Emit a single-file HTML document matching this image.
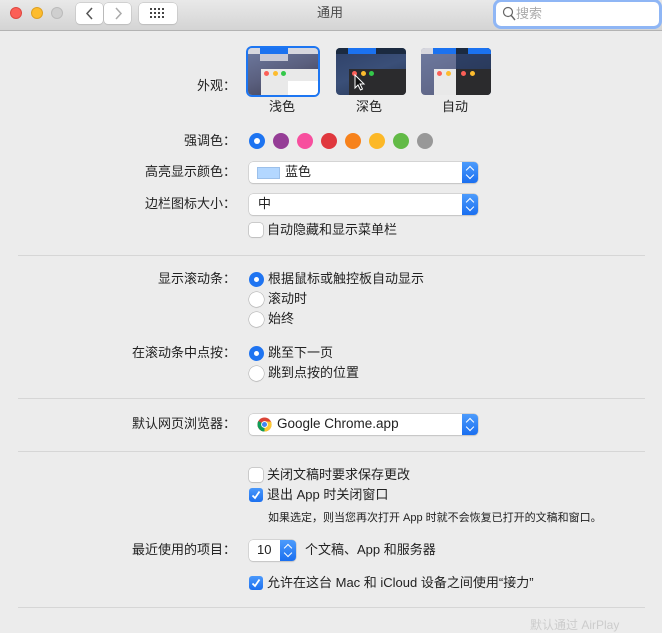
<!DOCTYPE html>
<html><head><meta charset="utf-8"><style>
*{margin:0;padding:0;box-sizing:border-box}
body{width:662px;height:624px;background:#ececec;font-family:"Liberation Sans","Noto Sans CJK SC",sans-serif;font-size:13px;color:#222;position:relative;overflow:hidden}
.a{position:absolute}
.tb{left:0;top:0;width:662px;height:31px;background:linear-gradient(#e9e9e9,#d4d4d4);border-bottom:1px solid #b3b3b3}
.tl{width:12px;height:12px;border-radius:50%;top:7px}
.btn{background:#fff;border-radius:4px;box-shadow:0 0 0 .5px #bbb,0 1px 1px rgba(0,0,0,.12);height:21px;top:3px}
.lbl{right:426px;text-align:right;white-space:nowrap;line-height:16px}
.txt{white-space:nowrap;line-height:16px}
.sep{left:18px;width:627px;height:1px;background:#d6d6d6}
.pop{background:#fff;border-radius:4px;box-shadow:0 0 0 .5px #bdbdbd,0 1px 1px rgba(0,0,0,.15);height:21px}
.step{position:absolute;right:0;top:0;width:16px;height:21px;background:linear-gradient(#4c9bfc,#1a6ff0);border-radius:0 4px 4px 0}
.cb{width:14px;height:14px;border-radius:3px;background:#fff;box-shadow:0 0 0 .5px #aaa,0 1px 1px rgba(0,0,0,.1)}
.cbon{background:linear-gradient(#4a98fb,#1c70ef);box-shadow:none}
.rd{width:15px;height:15px;border-radius:50%;background:#fff;box-shadow:0 0 0 .5px #aaa,0 1px 1px rgba(0,0,0,.1)}
.rdon{background:#1f74f1;box-shadow:none}
.rdon:after{content:"";position:absolute;left:5px;top:5px;width:5px;height:5px;border-radius:50%;background:#fff}
.dot{width:16px;height:16px;border-radius:50%;top:133px}
.th{width:70px;height:47px;top:48px;border-radius:4px;overflow:hidden}
</style></head><body>
<div class="a tb"></div>
<div class="a tl" style="left:10px;background:#fc5f57;border:.5px solid #de4840"></div>
<div class="a tl" style="left:31px;background:#fdbc2e;border:.5px solid #dea123"></div>
<div class="a tl" style="left:51px;background:#cfcfcf;border:.5px solid #bbb"></div>
<div class="a btn" style="left:76px;width:27px"></div>
<div class="a btn" style="left:104px;width:27px"></div>
<svg class="a" style="left:84px;top:6px" width="12" height="15"><path d="M8 2 L3 7.5 L8 13" stroke="#555" stroke-width="1.5" fill="none"/></svg>
<svg class="a" style="left:112px;top:6px" width="12" height="15"><path d="M4 2 L9 7.5 L4 13" stroke="#aaa" stroke-width="1.5" fill="none"/></svg>
<div class="a btn" style="left:139px;width:38px"></div>
<svg class="a" style="left:150px;top:8px" width="16" height="12"><g fill="#444"><rect x="0" y="0" width="2" height="2"/><rect x="4" y="0" width="2" height="2"/><rect x="8" y="0" width="2" height="2"/><rect x="12" y="0" width="2" height="2"/><rect x="0" y="4" width="2" height="2"/><rect x="4" y="4" width="2" height="2"/><rect x="8" y="4" width="2" height="2"/><rect x="12" y="4" width="2" height="2"/><rect x="0" y="8" width="2" height="2"/><rect x="4" y="8" width="2" height="2"/><rect x="8" y="8" width="2" height="2"/><rect x="12" y="8" width="2" height="2"/></g></svg>
<div class="a txt" style="left:317px;top:5px;color:#4a4a4a">通用</div>
<div class="a" style="left:496px;top:2px;width:163px;height:24px;border-radius:5px;background:#fff;box-shadow:0 0 0 3px #8fb6f5,0 0 0 .5px #6a9ee8"></div>
<svg class="a" style="left:502px;top:6px" width="15" height="16"><circle cx="6" cy="6" r="4.5" stroke="#666" stroke-width="1.2" fill="none"/><path d="M9.3 9.5 L13 14" stroke="#666" stroke-width="1.4"/></svg>
<div class="a txt" style="left:516px;top:6px;color:#aaa">搜索</div>

<div class="a lbl" style="top:78px">外观：</div>
<div class="a th" style="left:248px;background:linear-gradient(160deg,#6e7aa0,#5a5f7e 50%,#3a3b4d);box-shadow:0 0 0 2px #1d76f2">
 <div class="a" style="left:0;top:0;width:70px;height:6px;background:#d7d7de"></div>
 <div class="a" style="left:12px;top:0;width:28px;height:6px;background:#1b72f0"></div>
 <div class="a" style="left:12px;top:6px;width:28px;height:7px;background:#c7c9d6"></div>
 <div class="a" style="left:13px;top:21px;width:57px;height:26px;background:#e9e9e9"></div>
 <div class="a" style="left:40px;top:33px;width:30px;height:14px;background:#fff"></div>
 <div class="a" style="left:16px;top:23px;width:5px;height:5px;border-radius:50%;background:#fc5f57"></div>
 <div class="a" style="left:25px;top:23px;width:5px;height:5px;border-radius:50%;background:#fdbc2e"></div>
 <div class="a" style="left:33px;top:23px;width:5px;height:5px;border-radius:50%;background:#34c84a"></div>
</div>
<div class="a th" style="left:336px;background:linear-gradient(160deg,#2f4168,#3a4f78 50%,#263553)">
 <div class="a" style="left:0;top:0;width:70px;height:6px;background:#1b2a40"></div>
 <div class="a" style="left:12px;top:0;width:28px;height:6px;background:#1b72f0"></div>
 <div class="a" style="left:13px;top:21px;width:57px;height:26px;background:#2b2b2d"></div>
 <div class="a" style="left:16px;top:23px;width:5px;height:5px;border-radius:50%;background:#fc5f57"></div>
 <div class="a" style="left:25px;top:23px;width:5px;height:5px;border-radius:50%;background:#fdbc2e"></div>
 <div class="a" style="left:33px;top:23px;width:5px;height:5px;border-radius:50%;background:#34c84a"></div>
</div>
<svg class="a" style="left:354px;top:74px" width="12" height="18"><path d="M1 1 L1 14 L4 11 L6.5 16 L8.5 15 L6 10 L10 10 Z" fill="#111" stroke="#fff" stroke-width="1"/></svg>
<div class="a th" style="left:421px;background:linear-gradient(160deg,#6e7aa0,#5a5f7e)">
 <div class="a" style="left:35px;top:0;width:35px;height:47px;background:linear-gradient(160deg,#2f4168,#263553)"></div>
 <div class="a" style="left:0;top:0;width:35px;height:6px;background:#d7d7de"></div>
 <div class="a" style="left:35px;top:0;width:35px;height:6px;background:#1b2a40"></div>
 <div class="a" style="left:12px;top:0;width:23px;height:6px;background:#1b72f0"></div>
 <div class="a" style="left:47px;top:0;width:23px;height:6px;background:#1b72f0"></div>
 <div class="a" style="left:13px;top:21px;width:22px;height:26px;background:#e9e9e9"></div>
 <div class="a" style="left:35px;top:21px;width:35px;height:26px;background:#2b2b2d"></div>
 <div class="a" style="left:16px;top:23px;width:5px;height:5px;border-radius:50%;background:#fc5f57"></div>
 <div class="a" style="left:25px;top:23px;width:5px;height:5px;border-radius:50%;background:#fdbc2e"></div>
 <div class="a" style="left:40px;top:23px;width:5px;height:5px;border-radius:50%;background:#fc5f57"></div>
 <div class="a" style="left:49px;top:23px;width:5px;height:5px;border-radius:50%;background:#fdbc2e"></div>
</div>
<div class="a txt" style="left:269px;top:99px">浅色</div>
<div class="a txt" style="left:356px;top:99px">深色</div>
<div class="a txt" style="left:442px;top:99px">自动</div>

<div class="a lbl" style="top:133px">强调色：</div>
<div class="a dot" style="left:249px;background:#1d74f1"><div class="a" style="left:5px;top:5px;width:6px;height:6px;border-radius:50%;background:#fff"></div></div>
<div class="a dot" style="left:273px;background:#953d96"></div>
<div class="a dot" style="left:297px;background:#f74f9e"></div>
<div class="a dot" style="left:321px;background:#e0383e"></div>
<div class="a dot" style="left:345px;background:#f7821b"></div>
<div class="a dot" style="left:369px;background:#fcb827"></div>
<div class="a dot" style="left:393px;background:#62ba46"></div>
<div class="a dot" style="left:417px;background:#989898"></div>

<div class="a lbl" style="top:164px">高亮显示颜色：</div>
<div class="a pop" style="left:249px;top:162px;width:229px"><div class="a" style="left:8px;top:5px;width:23px;height:12px;background:#b3d7ff;border:1px solid #9cc0ea"></div><div class="a txt" style="left:36px;top:2px">蓝色</div><div class="step"></div></div>
<div class="a lbl" style="top:196px">边栏图标大小：</div>
<div class="a pop" style="left:249px;top:194px;width:229px"><div class="a txt" style="left:9px;top:2px">中</div><div class="step"></div></div>
<div class="a cb" style="left:249px;top:223px"></div>
<div class="a txt" style="left:267px;top:222px">自动隐藏和显示菜单栏</div>
<div class="a sep" style="top:255px"></div>

<div class="a lbl" style="top:271px">显示滚动条：</div>
<div class="a rd rdon" style="left:249px;top:272px"></div><div class="a txt" style="left:268px;top:271px">根据鼠标或触控板自动显示</div>
<div class="a rd" style="left:249px;top:292px"></div><div class="a txt" style="left:268px;top:291px">滚动时</div>
<div class="a rd" style="left:249px;top:312px"></div><div class="a txt" style="left:268px;top:311px">始终</div>
<div class="a lbl" style="top:345px">在滚动条中点按：</div>
<div class="a rd rdon" style="left:249px;top:346px"></div><div class="a txt" style="left:268px;top:345px">跳至下一页</div>
<div class="a rd" style="left:249px;top:366px"></div><div class="a txt" style="left:268px;top:365px">跳到点按的位置</div>
<div class="a sep" style="top:398px"></div>

<div class="a lbl" style="top:416px">默认网页浏览器：</div>
<div class="a pop" style="left:249px;top:414px;width:229px">
<svg class="a" style="left:8px;top:3px" width="15" height="15" viewBox="0 0 16 16"><circle cx="8" cy="8" r="7.5" fill="#db4437"/><path d="M8 8 L1.5 4.3 A7.5 7.5 0 0 0 8 15.5 Z" fill="#0f9d58"/><path d="M8 8 L8 15.5 A7.5 7.5 0 0 0 15 5 L8 4.5Z" fill="#fcc934"/><circle cx="8" cy="8" r="3.6" fill="#fff"/><circle cx="8" cy="8" r="2.7" fill="#4285f4"/></svg>
<div class="a txt" style="left:28px;top:2px;font-size:13.5px">Google Chrome.app</div><div class="step"></div></div>
<div class="a sep" style="top:451px"></div>

<div class="a cb" style="left:249px;top:468px"></div><div class="a txt" style="left:267px;top:467px">关闭文稿时要求保存更改</div>
<div class="a cb cbon" style="left:249px;top:488px"><svg width="14" height="14"><path d="M3.5 7.5 L6 10 L10.5 3.5" stroke="#fff" stroke-width="1.8" fill="none"/></svg></div><div class="a txt" style="left:267px;top:487px">退出 App 时关闭窗口</div>
<div class="a txt" style="left:268px;top:510px;font-size:11px">如果选定，则当您再次打开 App 时就不会恢复已打开的文稿和窗口。</div>
<div class="a lbl" style="top:542px">最近使用的项目：</div>
<div class="a pop" style="left:249px;top:540px;width:47px"><div class="a txt" style="left:8px;top:2px">10</div><div class="step"></div></div>
<div class="a txt" style="left:305px;top:542px">个文稿、App 和服务器</div>
<div class="a cb cbon" style="left:249px;top:576px"><svg width="14" height="14"><path d="M3.5 7.5 L6 10 L10.5 3.5" stroke="#fff" stroke-width="1.8" fill="none"/></svg></div><div class="a txt" style="left:267px;top:575px">允许在这台 Mac 和 iCloud 设备之间使用“接力”</div>
<div class="a sep" style="top:607px"></div>
<div class="a txt" style="left:530px;top:617px;color:#ccc;font-size:12px">默认通过 AirPlay</div>
<style>.step:before{content:"";position:absolute;left:4px;top:4px;width:5px;height:5px;border-left:1.5px solid #fff;border-top:1.5px solid #fff;transform:translate(1px,1px) rotate(45deg)}.step:after{content:"";position:absolute;left:4px;top:11px;width:5px;height:5px;border-right:1.5px solid #fff;border-bottom:1.5px solid #fff;transform:translate(1px,-1px) rotate(45deg)}</style>
</body></html>
